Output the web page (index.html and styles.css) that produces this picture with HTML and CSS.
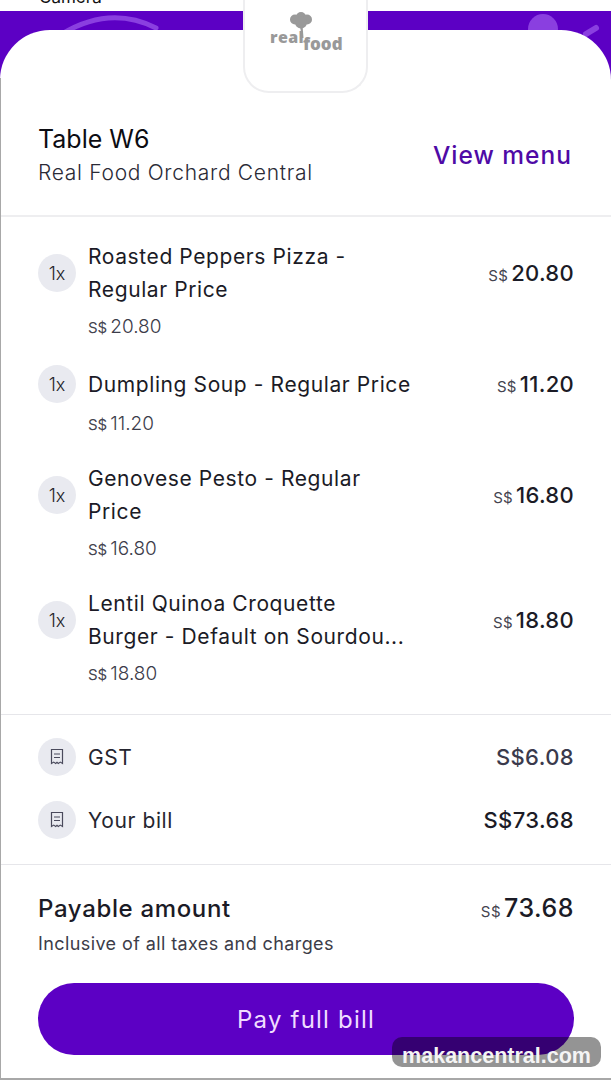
FILE: index.html
```html
<!DOCTYPE html>
<html lang="en">
<head>
    <meta charset="UTF-8">
    <meta name="viewport" content="width=device-width, initial-scale=1.0">
    <title>Pay bill</title>
    <link rel="stylesheet" href="styles.css">
</head>
<body>
    <div class="page">
        <div class="top-strip"><span class="top-label">Camera</span></div>
        <div class="banner">
            <svg class="banner-art" width="611" height="69" viewBox="0 0 611 69">
                <path d="M62 23 Q110 -6 156 17" fill="none" stroke="#8a3fe0" stroke-width="5" stroke-linecap="round"/>
                <circle cx="543" cy="18" r="15" fill="#8a3fe0"/>
                <path d="M586 23 L596 17" stroke="#8a3fe0" stroke-width="6" stroke-linecap="round"/>
            </svg>
        </div>

        <div class="sheet">
            <div class="logo-tab">
                <svg class="logo-tree" width="22" height="28" viewBox="0 0 22 28">
                    <path d="M9.500 12h3l.5 8 .5 6h-1.500l-1-6z" fill="#999"/>
                    <circle cx="5" cy="7.500" r="5" fill="#999"/>
                    <circle cx="11" cy="5" r="5" fill="#999"/>
                    <circle cx="17" cy="7.500" r="5" fill="#999"/>
                    <circle cx="11" cy="10.500" r="6" fill="#999"/>
                </svg>
                <span class="logo-real">real</span>
                <span class="logo-food">food</span>
            </div>

            <div class="table-head">
                <div>
                    <div class="table-name">Table W6</div>
                    <div class="table-place">Real Food Orchard Central</div>
                </div>
                <a class="view-menu" href="#">View menu</a>
            </div>

            <div class="items">
                <div class="item">
                    <div class="item-row">
                        <span class="circle">1x</span>
                        <div class="item-name">Roasted Peppers Pizza -<br>Regular Price</div>
                        <div class="price"><small>S$</small>20.80</div>
                    </div>
                    <div class="item-sub"><small>S$</small>20.80</div>
                </div>
                <div class="item">
                    <div class="item-row">
                        <span class="circle">1x</span>
                        <div class="item-name">Dumpling Soup - Regular Price</div>
                        <div class="price"><small>S$</small>11.20</div>
                    </div>
                    <div class="item-sub"><small>S$</small>11.20</div>
                </div>
                <div class="item">
                    <div class="item-row">
                        <span class="circle">1x</span>
                        <div class="item-name">Genovese Pesto - Regular<br>Price</div>
                        <div class="price"><small>S$</small>16.80</div>
                    </div>
                    <div class="item-sub"><small>S$</small>16.80</div>
                </div>
                <div class="item">
                    <div class="item-row">
                        <span class="circle">1x</span>
                        <div class="item-name">Lentil Quinoa Croquette<br>Burger - Default on Sourdou...</div>
                        <div class="price"><small>S$</small>18.80</div>
                    </div>
                    <div class="item-sub"><small>S$</small>18.80</div>
                </div>
            </div>

            <div class="totals">
                <div class="total-row">
                    <span class="circle">
                        <svg width="16" height="18" viewBox="0 0 16 18" fill="none" stroke="#4a4a5c" stroke-width="1.2">
                            <path d="M2.500 1.500h11v14l-2.200-1.400-2 1.400-1.300-1.200-1.300 1.200-2-1.400-2.200 1.400z"/>
                            <path d="M5 6h6M5 9.500h6"/>
                        </svg>
                    </span>
                    <span class="total-label">GST</span>
                    <span class="total-value muted">S$6.08</span>
                </div>
                <div class="total-row">
                    <span class="circle">
                        <svg width="16" height="18" viewBox="0 0 16 18" fill="none" stroke="#4a4a5c" stroke-width="1.2">
                            <path d="M2.500 1.500h11v14l-2.200-1.400-2 1.400-1.300-1.200-1.300 1.200-2-1.400-2.200 1.400z"/>
                            <path d="M5 6h6M5 9.500h6"/>
                        </svg>
                    </span>
                    <span class="total-label">Your bill</span>
                    <span class="total-value">S$73.68</span>
                </div>
            </div>

            <div class="payable">
                <div class="payable-row">
                    <span class="payable-label">Payable amount</span>
                    <span class="payable-value"><small>S$</small>73.68</span>
                </div>
                <div class="payable-note">Inclusive of all taxes and charges</div>
                <button class="pay-btn">Pay full bill</button>
            </div>
        </div>

        <div class="watermark">makancentral.com</div>
    </div>
</body>
</html>
```

FILE: styles.css
```css
html, body {
    margin: 0;
    background-color: #fff;
}
.page {
    position: relative;
    width: 611px;
    height: 1080px;
    overflow: hidden;
    font-family: Inter, "Liberation Sans", sans-serif;
    color: #1b1b26;
    border-bottom: 2px solid #a8a8a8;
    box-sizing: border-box;
}
/* thin edge of the phone frame, starts below the sheet's corner */
.page::after {
    content: '';
    position: absolute;
    left: 0;
    top: 78px;
    bottom: 0;
    width: 1px;
    background-color: #a8a8a8;
}
.top-strip {
    height: 11px;
    overflow: hidden;
}
.top-label {
    display: block;
    margin: -13px 0 0 39px;
    font-size: 17px;
    line-height: 20px;
    color: #111;
}
.banner {
    height: 69px;
    background-color: #5c00c4;
}
.banner-art {
    display: block;
}
.sheet {
    position: relative;
    margin-top: -50px;
    height: 1048px;
    box-sizing: border-box;
    padding-top: 60px;
    background-color: #fff;
    border-radius: 50px 50px 0 0;
}
.logo-tab {
    position: absolute;
    top: -30px;
    left: 243px;
    width: 125px;
    height: 93px;
    box-sizing: border-box;
    background-color: #fff;
    border: 2px solid #eeeef0;
    border-top: none;
    border-radius: 0 0 26px 26px;
}
.logo-tree {
    position: absolute;
    left: 45px;
    top: 12px;
}
.logo-real,
.logo-food {
    position: absolute;
    font-family: "Open Sans", sans-serif;
    font-weight: 800;
    line-height: 20px;
    color: #999;
}
.logo-real {
    left: 25px;
    top: 27px;
    font-size: 16px;
    letter-spacing: 0.4px;
}
.logo-food {
    left: 58px;
    top: 34px;
    font-size: 17px;
}
.table-head {
    display: flex;
    align-items: center;
    justify-content: space-between;
    padding: 32px 39px 25px 38px;
    border-bottom: 2px solid #eeeef0;
}
.table-name {
    font-size: 25px;
    line-height: 34px;
    color: #0c0c12;
}
.table-place {
    font-size: 21px;
    font-weight: 350;
    line-height: 34px;
    letter-spacing: 0.7px;
    color: #2a2a36;
}
.view-menu {
    margin-bottom: 2px;
    font-size: 24.5px;
    font-weight: 500;
    letter-spacing: 1px;
    text-decoration: none;
    color: #4f0aa6;
}
.items {
    padding: 23px 38px 27px;
    border-bottom: 1px solid #e6e6ea;
}
.item + .item {
    margin-top: 25px;
}
.item-row {
    display: flex;
    align-items: center;
}
.circle {
    display: flex;
    align-items: center;
    justify-content: center;
    flex: none;
    width: 38px;
    height: 38px;
    border-radius: 50%;
    background-color: #e9eaf0;
    font-size: 18px;
    font-weight: 300;
    color: #1f1f2a;
}
.item-name {
    flex: 1;
    margin-left: 12px;
    font-size: 21px;
    line-height: 33px;
    letter-spacing: 0.6px;
}
.price {
    margin-right: -1px;
    font-size: 22px;
    font-weight: 450;
    letter-spacing: 0.3px;
}
.price small,
.item-sub small,
.payable-value small {
    font-size: 15px;
    font-weight: 400;
    margin-right: 3px;
    color: #44444f;
}
.item-sub {
    margin: 9px 0 0 50px;
    font-size: 19px;
    font-weight: 300;
    line-height: 24px;
    color: #3c3c4a;
}
.totals {
    padding: 23px 37px 25px 38px;
    border-bottom: 1px solid #e6e6ea;
}
.total-row {
    display: flex;
    align-items: center;
}
.total-row + .total-row {
    margin-top: 25px;
}
.total-label {
    flex: 1;
    margin-left: 12px;
    font-size: 21px;
    letter-spacing: 0.6px;
    color: #25252f;
}
.total-value {
    font-size: 22px;
    font-weight: 450;
    letter-spacing: 0.4px;
}
.total-value.muted {
    color: #3a3a4c;
}
.payable {
    padding: 28px 37px 0 38px;
}
.payable-row {
    display: flex;
    align-items: center;
    justify-content: space-between;
}
.payable-label {
    font-size: 24px;
    font-weight: 450;
    letter-spacing: 0.65px;
}
.payable-value {
    font-size: 25px;
    font-weight: 450;
    letter-spacing: 0.5px;
}
.payable-note {
    margin-top: 9px;
    font-size: 18px;
    line-height: 24px;
    letter-spacing: 0.4px;
    color: #3c3c48;
}
.pay-btn {
    display: block;
    width: 536px;
    height: 72px;
    margin-top: 27px;
    border: none;
    border-radius: 36px;
    background-color: #5c00c4;
    font-family: inherit;
    font-size: 24px;
    letter-spacing: 1.2px;
    color: #f0dcff;
}
.watermark {
    position: absolute;
    left: 392px;
    top: 1037px;
    width: 209px;
    height: 30px;
    box-sizing: border-box;
    padding-top: 9px;
    border-radius: 10px;
    background-color: rgba(0, 0, 0, 0.42);
    font-family: "Liberation Sans", sans-serif;
    font-weight: 700;
    font-size: 21.5px;
    line-height: 21px;
    text-align: center;
    color: #f4f4f4;
}
```
